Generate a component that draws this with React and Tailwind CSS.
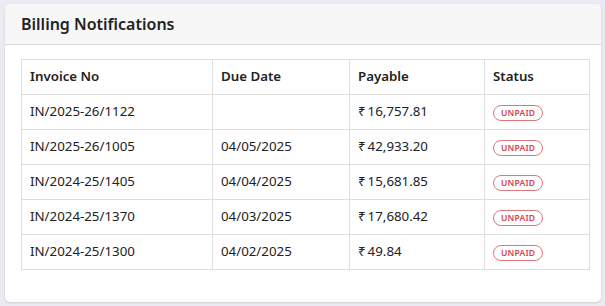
const invoices = [
  { no: "IN/2025-26/1122", due: "", amount: "16,757.81" },
  { no: "IN/2025-26/1005", due: "04/05/2025", amount: "42,933.20" },
  { no: "IN/2024-25/1405", due: "04/04/2025", amount: "15,681.85" },
  { no: "IN/2024-25/1370", due: "04/03/2025", amount: "17,680.42" },
  { no: "IN/2024-25/1300", due: "04/02/2025", amount: "49.84" },
];

export default function App() {
  return (
    <div
      className="min-h-screen bg-[#ebebf4] pt-[4px] pl-[5px]"
      style={{ fontFamily: '"Noto Sans", "Open Sans", sans-serif' }}
    >
      <div className="w-[596px] h-[298px] bg-white rounded-[5px] shadow-sm overflow-hidden">
        <div className="h-[41px] bg-[#f7f7f7] border-b border-[#dcdcdc] px-4 flex items-center">
          <h2 className="text-[16px] font-semibold text-[#222]">Billing Notifications</h2>
        </div>
        <div className="pt-[14px] pl-4">
          <table className="w-[568px] border-collapse text-[13.3px] text-[#222] table-fixed">
            <colgroup>
              <col className="w-[191px]" />
              <col className="w-[137px]" />
              <col className="w-[135px]" />
              <col className="w-[105px]" />
            </colgroup>
            <thead>
              <tr className="h-[35px]">
                <th className="border border-[#dedede] px-2 text-left font-semibold">Invoice No</th>
                <th className="border border-[#dedede] px-2 text-left font-semibold">Due Date</th>
                <th className="border border-[#dedede] px-2 text-left font-semibold">Payable</th>
                <th className="border border-[#dedede] px-2 text-left font-semibold">Status</th>
              </tr>
            </thead>
            <tbody>
              {invoices.map((inv) => (
                <tr key={inv.no} className="h-[35px]">
                  <td className="border border-[#dedede] px-2">{inv.no}</td>
                  <td className="border border-[#dedede] px-2">{inv.due}</td>
                  <td className="border border-[#dedede] px-2">
                    <span className="mr-[2px]">₹</span>
                    {inv.amount}
                  </td>
                  <td className="border border-[#dedede] px-2">
                    <span className="inline-flex items-center h-[16px] px-[7px] rounded-full border border-[#d9777a] text-[#d0454b] text-[8.5px] font-semibold tracking-[0.2px] leading-none">
                      UNPAID
                    </span>
                  </td>
                </tr>
              ))}
            </tbody>
          </table>
        </div>
      </div>
    </div>
  );
}
